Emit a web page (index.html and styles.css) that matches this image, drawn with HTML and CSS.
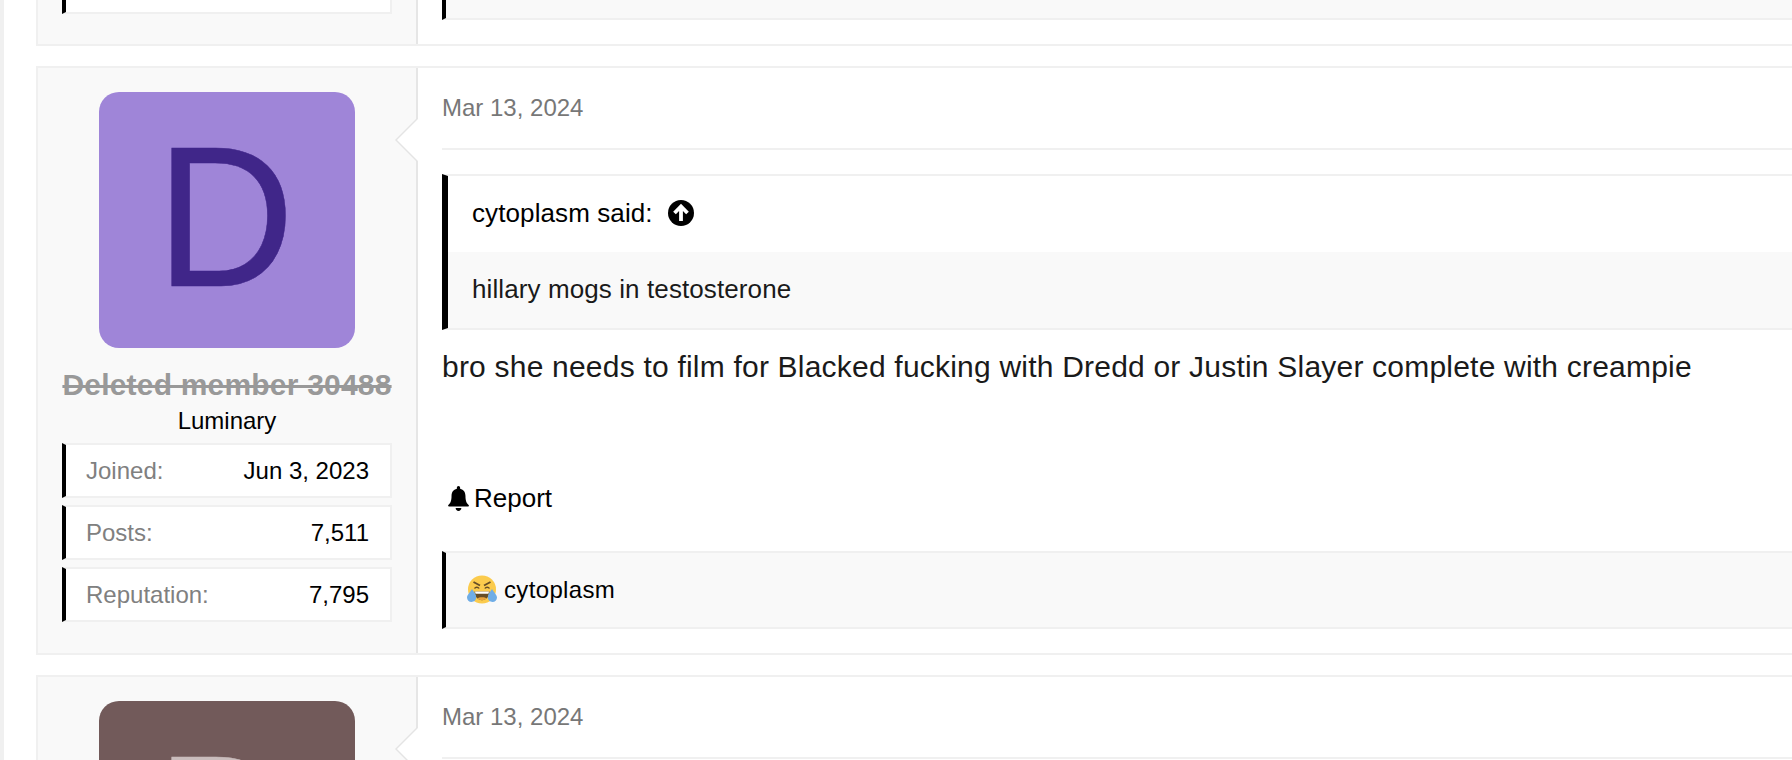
FILE: index.html
```html
<!DOCTYPE html>
<html lang="en">
<head>
<meta charset="utf-8">
<title>Thread</title>
<link rel="stylesheet" href="styles.css">
</head>
<body>
<div class="page">
  <article class="message message-prev">
    <aside class="user">
      <div class="stats"><div class="stat stat-empty"></div></div>
    </aside>
    <div class="main">
      <div class="reactions reactions-empty"></div>
    </div>
  </article>

  <article class="message">
    <aside class="user">
      <div class="avatar avatar-purple"><span class="letter">D</span></div>
      <div class="name">Deleted member 30488</div>
      <div class="title">Luminary</div>
      <div class="stats">
        <div class="stat"><span class="label">Joined:</span><span class="value">Jun 3, 2023</span></div>
        <div class="stat"><span class="label">Posts:</span><span class="value">7,511</span></div>
        <div class="stat"><span class="label">Reputation:</span><span class="value">7,795</span></div>
      </div>
    </aside>
    <div class="main">
      <header class="head">Mar 13, 2024</header>
      <blockquote class="quote">
        <div class="quote-head">cytoplasm said:
          <svg class="up" viewBox="0 0 26 26" aria-hidden="true"><circle cx="13" cy="13" r="13" fill="#000"/><path d="M13 21V7M6.500 13l6.500-6.500 6.500 6.500" fill="none" stroke="#fff" stroke-width="3.800" stroke-linejoin="miter"/></svg>
        </div>
        <div class="quote-body">hillary mogs in testosterone</div>
      </blockquote>
      <div class="body">bro she needs to film for Blacked fucking with Dredd or Justin Slayer complete with creampie</div>
      <div class="report">
        <svg class="bell" viewBox="0 0 22 26" aria-hidden="true"><path d="M11 0c1 0 1.700.8 1.700 1.800v.9c3.800.8 5.600 3.900 5.600 7.600 0 5.200 1.200 7.400 3.300 9.500.5.500.4 1.600-.7 1.600H1.100C0 21.400-.1 20.300.4 19.800c2.100-2.100 3.300-4.300 3.300-9.500 0-3.700 1.800-6.800 5.600-7.600v-.9C9.300.8 10 0 11 0zM8 23h6c0 1.700-1.300 3-3 3s-3-1.300-3-3z" fill="#000"/></svg>Report
      </div>
      <div class="reactions">
        <svg class="emoji" viewBox="0 0 30 30" aria-hidden="true">
          <circle cx="15" cy="14.500" r="14" fill="#fbcb4d"/>
          <path d="M6.500 7l6.500 3.500M23.500 7L17 10.500" stroke="#664e27" stroke-width="1.900" fill="none"/>
          <path d="M7.500 13.500c1-1.800 3.600-1.800 4.600 0M17.900 13.500c1-1.800 3.600-1.800 4.600 0" stroke="#664e27" stroke-width="1.500" fill="none"/>
          <path d="M7.500 16.500h15c0 5.200-3.400 8.700-7.500 8.700s-7.500-3.500-7.500-8.700z" fill="#664e27"/>
          <path d="M8 16.500h14l-.5 2.300H8.500z" fill="#fff"/>
          <path d="M10.500 23.500c1-1.600 8-1.600 9 0-2.500 2.200-6.500 2.200-9 0z" fill="#e8a33d"/>
          <path d="M5 14c2 3.500 4.200 5 4.200 8.300 0 2.800-2.200 4.700-4.700 4.700S0 25 0 22.500C0 20 3.500 17 5 14z" fill="#6fade6"/>
          <path d="M25 14c-2 3.500-4.200 5-4.200 8.300 0 2.800 2.200 4.700 4.700 4.700S30 25 30 22.500C30 20 26.500 17 25 14z" fill="#6fade6"/>
        </svg>
        <span>cytoplasm</span>
      </div>
    </div>
  </article>

  <article class="message message-next">
    <aside class="user">
      <div class="avatar avatar-brown"><span class="letter">D</span></div>
    </aside>
    <div class="main">
      <header class="head">Mar 13, 2024</header>
    </div>
  </article>
</div>
</body>
</html>
```

FILE: styles.css
```css
* { box-sizing: border-box; }
html, body { margin: 0; height: 760px; overflow: hidden; background: #fff; }
body { font-family: "Liberation Sans", Arial, sans-serif; color: #1a1a1a; border-left: 4px solid #f0f0f0; }

.page { display: flex; flex-direction: column; gap: 20px; padding-left: 32px; margin-top: -254px; width: 1900px; }

.message {
  display: flex;
  border: 2px solid #f0f0f0;
  background: #fff;
}
.message-prev { height: 300px; }

.user {
  flex: 0 0 380px;
  background: #f9f9f9;
  border-right: 2px solid #e6e6e6;
  padding: 24px 24px 31px;
  display: flex;
  flex-direction: column;
  align-items: center;
}
.message-prev .user { justify-content: flex-end; padding-bottom: 30px; }

.main { flex: 1; padding: 0 24px 24px; position: relative; display: flex; flex-direction: column; }
.main::before, .main::after {
  content: "";
  position: absolute;
  top: 50px;
  width: 0;
  height: 0;
  border-style: solid;
  border-width: 22px 22px 22px 0;
}
.main::before { left: -23px; border-color: transparent #e4e4e4 transparent transparent; }
.main::after { left: -21px; border-color: transparent #fff transparent transparent; }
.message-prev .main::before, .message-prev .main::after { display: none; }
.message-prev .main { justify-content: flex-end; }

.avatar {
  width: 256px;
  height: 256px;
  flex: none;
  border-radius: 20px;
  display: flex;
  align-items: center;
  justify-content: center;
  padding: 0 3px 6px 0;
  font-size: 200px;
  line-height: 1;
}
.letter { display: block; transform: scaleX(.96); -webkit-text-stroke: .5px currentColor; }
.avatar-purple { background: #9f85d8; color: #402689; }
.avatar-brown { background: #725a5a; color: #c9bcbc; }

.name {
  margin-top: 19px;
  font-size: 30px;
  line-height: 36px;
  font-weight: 700;
  letter-spacing: .2px;
  color: #999;
  text-decoration: line-through;
  white-space: nowrap;
}
.title { font-size: 24px; line-height: 30px; margin-top: 3px; color: #000; }

.stats { display: flex; flex-direction: column; gap: 7px; width: 330px; margin-top: 7px; align-self: flex-start; }
.stat {
  height: 55px;
  display: flex;
  align-items: center;
  justify-content: space-between;
  background: #fff;
  border: 2px solid #f0f0f0;
  border-left: 4px solid #000;
  padding: 0 21px 0 20px;
  font-size: 24px;
}
.stat-empty { height: 40px; }
.label { color: #808080; }
.value { color: #000; }

.head {
  height: 82px;
  flex: none;
  border-bottom: 2px solid #f0f0f0;
  font-size: 24px;
  color: #777;
  padding-top: 25px;
  line-height: 30px;
}

.quote { margin: 24px 0 0; border: solid #f0f0f0; border-width: 2px 0; border-left: 6px solid #000; }
.quote-head {
  height: 76px;
  display: flex;
  align-items: center;
  gap: 15px;
  padding: 0 0 2px 24px;
  font-size: 26px;
  letter-spacing: .1px;
  color: #000;
}
.quote-body {
  height: 76px;
  display: flex;
  align-items: center;
  padding: 0 0 2px 24px;
  background: #f9f9f9;
  font-size: 26px;
  letter-spacing: .1px;
}
.up { width: 26px; height: 26px; }

.body { font-size: 30px; line-height: 36px; margin-top: 19px; letter-spacing: .21px; white-space: nowrap; }

.report {
  display: flex;
  align-items: center;
  gap: 5px;
  margin-top: 97px;
  padding-left: 6px;
  font-size: 26px;
  height: 32px;
  color: #000;
}
.bell { width: 21px; height: 25px; }

.reactions {
  margin-top: 37px;
  height: 78px;
  flex: none;
  display: flex;
  align-items: center;
  gap: 7px;
  padding-left: 21px;
  background: #f9f9f9;
  border: solid #f0f0f0;
  border-width: 2px 0;
  border-left: 4px solid #000;
  font-size: 24px;
  letter-spacing: .35px;
  color: #000;
}
.reactions-empty { margin-top: 0; height: 60px; }
.emoji { width: 30px; height: 30px; }
```
